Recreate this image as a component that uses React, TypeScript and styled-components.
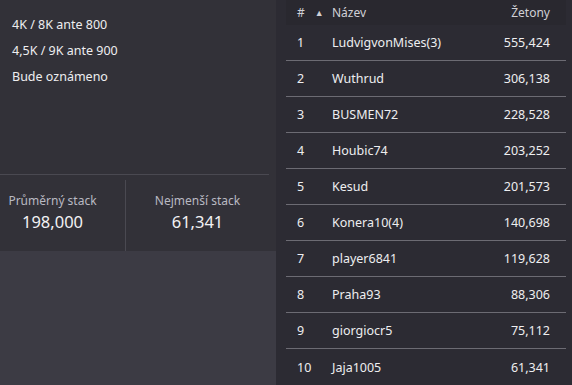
import React from "react";
import styled, { createGlobalStyle } from "styled-components";

const Global = createGlobalStyle`
  html, body { margin: 0; padding: 0; background: #2c2b33; }
  body { font-family: "Noto Sans", "Open Sans", sans-serif; color: #e8e8ec; }
`;

const Page = styled.div`
  display: flex;
  width: 572px;
  height: 385px;
  overflow: hidden;
  background: #2c2b33;
`;

const LeftColumn = styled.div`
  width: 276px;
  display: flex;
  flex-direction: column;
`;

const InfoPanel = styled.div`
  height: 251px;
  background: #323138;
  display: flex;
  flex-direction: column;
`;

const Levels = styled.div`
  padding: 12px 0 0 12px;
  height: 175px;
  box-sizing: border-box;
  border-bottom: 1px solid #4a4951;
  margin-right: 7px;
`;

const Level = styled.div`
  font-size: 12.5px;
  line-height: 26px;
  color: #eeeef0;
`;

const Stats = styled.div`
  display: flex;
  padding-top: 5px;
  flex: 1;
`;

const Stat = styled.div<{ $pr?: number; $divider?: boolean }>`
  width: ${(p) => (p.$divider ? "126px" : "143px")};
  box-sizing: border-box;
  padding-right: ${(p) => p.$pr ?? 0}px;
  border-right: ${(p) => (p.$divider ? "1px solid #4a4951" : "none")};
  text-align: center;
  padding-top: 12px;
`;

const StatLabel = styled.div`
  font-size: 12px;
  line-height: 18px;
  color: #b9b9c2;
`;

const StatValue = styled.div`
  font-size: 16.5px;
  line-height: 23px;
  color: #f2f2f4;
`;

const Filler = styled.div`
  flex: 1;
  background: #3c3b44;
`;

const TablePane = styled.div`
  flex: 1;
  padding: 0 6px 0 10px;
`;

const Table = styled.div`
  display: flex;
  flex-direction: column;
`;

const HeaderRow = styled.div`
  display: grid;
  grid-template-columns: 46px 1fr 90px;
  height: 25px;
  align-items: center;
  background: #29282f;
  font-size: 12px;
  color: #d0d0d6;
  padding-right: 16px;
`;

const Row = styled.div<{ $last?: boolean }>`
  display: grid;
  grid-template-columns: 46px 1fr 90px;
  height: 36px;
  box-sizing: border-box;
  align-items: center;
  border-bottom: ${(p) => (p.$last ? "none" : "1px solid #6c6b73")};
  font-size: 12.5px;
  color: #eeeef0;
  padding-right: 16px;
`;

const Rank = styled.div`
  padding-left: 11px;
  display: flex;
  align-items: center;
  gap: 10px;
`;

const SortArrow = styled.span`
  font-size: 9px;
  color: #d0d0d6;
`;

const Name = styled.div``;

const Chips = styled.div`
  text-align: right;
`;

const players: [string, string][] = [
  ["LudvigvonMises(3)", "555,424"],
  ["Wuthrud", "306,138"],
  ["BUSMEN72", "228,528"],
  ["Houbic74", "203,252"],
  ["Kesud", "201,573"],
  ["Konera10(4)", "140,698"],
  ["player6841", "119,628"],
  ["Praha93", "88,306"],
  ["giorgiocr5", "75,112"],
  ["Jaja1005", "61,341"],
];

export default function App() {
  return (
    <>
      <Global />
      <Page>
        <LeftColumn>
          <InfoPanel>
            <Levels>
              <Level>4K / 8K ante 800</Level>
              <Level>4,5K / 9K ante 900</Level>
              <Level>Bude oznámeno</Level>
            </Levels>
            <Stats>
              <Stat $divider $pr={20}>
                <StatLabel>Průměrný stack</StatLabel>
                <StatValue>198,000</StatValue>
              </Stat>
              <Stat>
                <StatLabel>Nejmenší stack</StatLabel>
                <StatValue>61,341</StatValue>
              </Stat>
            </Stats>
          </InfoPanel>
          <Filler />
        </LeftColumn>
        <TablePane>
          <Table>
            <HeaderRow>
              <Rank>
                #<SortArrow>▲</SortArrow>
              </Rank>
              <Name>Název</Name>
              <Chips>Žetony</Chips>
            </HeaderRow>
            {players.map(([n, c], i) => (
              <Row key={n} $last={i === players.length - 1}>
                <Rank>{i + 1}</Rank>
                <Name>{n}</Name>
                <Chips>{c}</Chips>
              </Row>
            ))}
          </Table>
        </TablePane>
      </Page>
    </>
  );
}
